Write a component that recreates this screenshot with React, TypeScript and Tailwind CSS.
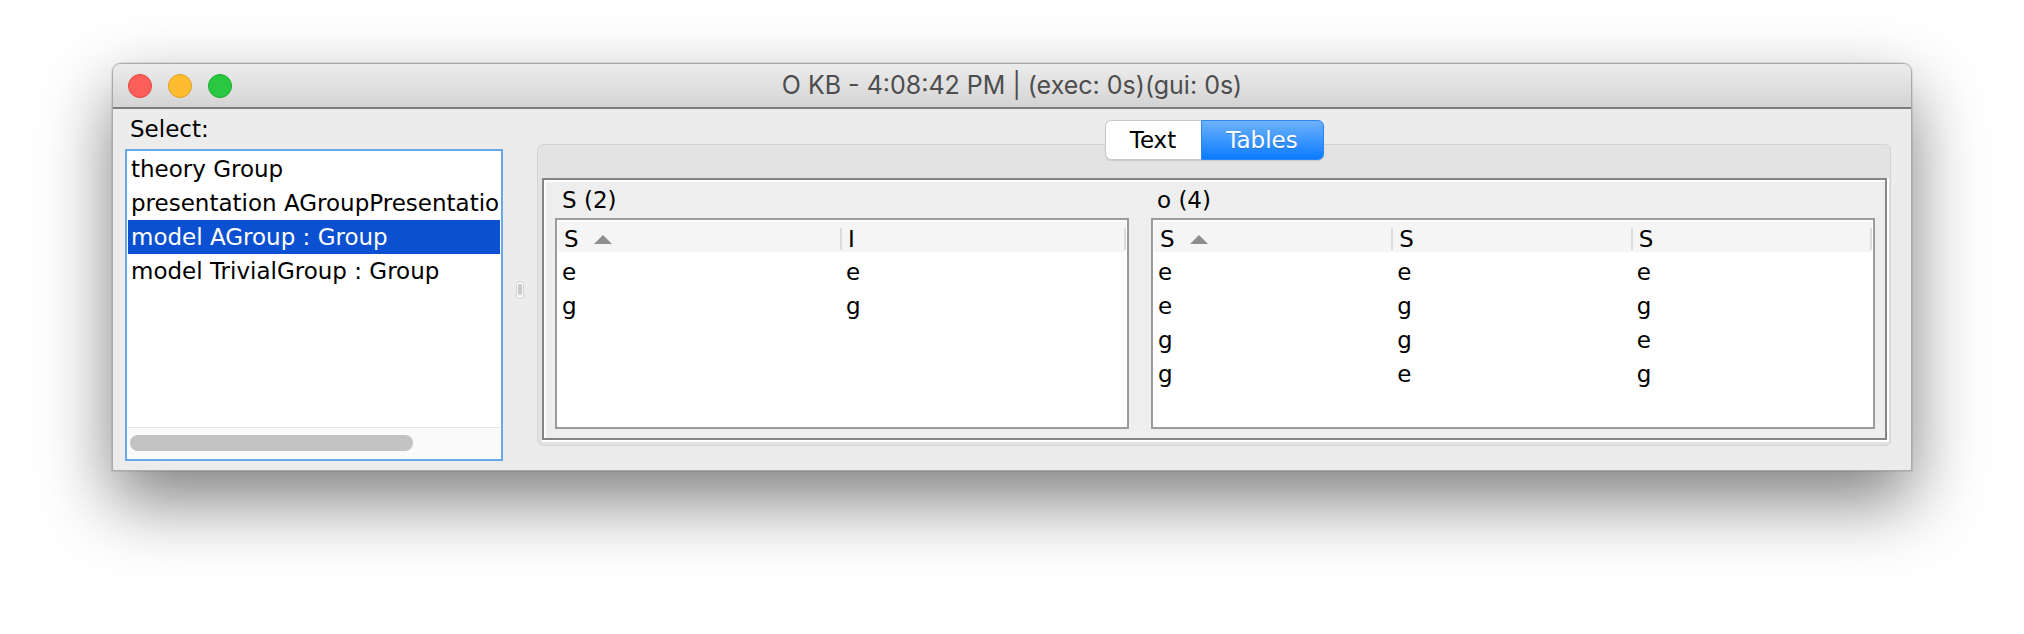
import React from "react";

type Row = string[];

const SortUp = () => (
  <svg width="18" height="9" viewBox="0 0 18 9" className="ml-[15px] shrink-0">
    <path d="M9 0 L18 9 L0 9 Z" fill="#8e8e8e" />
  </svg>
);

function HeaderCell({ label, sorted }: { label: string; sorted?: boolean }) {
  return (
    <div className="flex items-center h-full min-w-0">
      <div className="flex-1 flex items-center pl-[6px] min-w-0">
        <span>{label}</span>
        {sorted && <SortUp />}
      </div>
      <div className="w-[2px] h-[22px] bg-[#dcdcdc] shrink-0" />
    </div>
  );
}

function DataTable({
  widthClass,
  colsClass,
  headers,
  rows,
}: {
  widthClass: string;
  colsClass: string;
  headers: string[];
  rows: Row[];
}) {
  return (
    <div className={`${widthClass} h-[211px] border-2 border-[#9b9b9b] bg-white pt-[2px] px-px`}>
      <div className={`grid ${colsClass} h-[30px] bg-[#f5f5f5]`}>
        {headers.map((h, i) => (
          <HeaderCell key={i} label={h} sorted={i === 0} />
        ))}
      </div>
      <div className="pt-[3px]">
        {rows.map((r, i) => (
          <div key={i} className={`grid ${colsClass} h-[34px] leading-[34px]`}>
            {r.map((c, j) => (
              <div key={j} className="pl-[4px]">
                {c}
              </div>
            ))}
          </div>
        ))}
      </div>
    </div>
  );
}

export default function App() {
  const listItems = [
    "theory Group",
    "presentation AGroupPresentatio",
    "model AGroup : Group",
    "model TrivialGroup : Group",
  ];
  return (
    <div className="w-[2024px] h-[634px] bg-white overflow-hidden pt-[63px] pl-[112px] font-['DejaVu_Sans',sans-serif] text-[23px] text-black">
      <div className="w-[1800px] h-[408px] flex flex-col bg-[#ececec] border border-[#a9a9a9] rounded-t-[9px] overflow-hidden shadow-[0_30px_70px_rgba(0,0,0,0.5),0_0_0_1px_rgba(0,0,0,0.08)]">
        {/* Title bar */}
        <div className="h-[45px] shrink-0 grid grid-cols-[1fr_auto_1fr] items-center bg-[linear-gradient(#ececec,#d4d4d4)] border-b-2 border-[#7c7c7c]">
          <div className="flex items-center gap-[16px] pl-[15px]">
            <div className="w-[24px] h-[24px] rounded-full bg-[#fe5f58] border border-[#e0443e]" />
            <div className="w-[24px] h-[24px] rounded-full bg-[#febc2e] border border-[#dea123]" />
            <div className="w-[24px] h-[24px] rounded-full bg-[#29c840] border border-[#1aab29]" />
          </div>
          <div className="font-['Inter',sans-serif] text-[25px] text-[#4d4d4d] whitespace-nowrap">
            O KB - 4:08:42 PM | (exec: 0s)(gui: 0s)
          </div>
          <div />
        </div>

        {/* Content */}
        <div className="flex flex-1 min-h-0">
          {/* Left column */}
          <div className="ml-[12px] w-[378px] flex flex-col">
            <div className="h-[40px] leading-[40px] pl-[5px]">Select:</div>
            <div className="h-[312px] border-2 border-[#67a8ea] bg-white flex flex-col p-px">
              <div className="flex-1 min-h-0 overflow-hidden">
                {listItems.map((t, i) => (
                  <div
                    key={i}
                    className={`h-[34px] leading-[34px] pl-[3px] whitespace-nowrap ${
                      i === 2 ? "bg-[#0b50d1] text-white" : ""
                    }`}
                  >
                    {t}
                  </div>
                ))}
              </div>
              <div className="h-[31px] shrink-0 border-t border-[#e4e4e4] bg-[#fafafa] flex items-center">
                <div className="ml-[2px] w-[283px] h-[16px] rounded-full bg-[#c2c2c2]" />
              </div>
            </div>
          </div>

          {/* Splitter */}
          <div className="w-[34px] flex items-center justify-center">
            <div className="w-[8px] h-[18px] rounded-[3px] bg-[#f6f6f6] border border-[#d6d6d6] flex items-center justify-center">
              <div className="w-[4px] h-[11px] rounded-full bg-[#c9c9c9]" />
            </div>
          </div>

          {/* Right column */}
          <div className="w-[1354px] flex flex-col items-center pt-[11px]">
            <div className="relative z-10 flex h-[40px] shadow-[0_1px_1px_rgba(0,0,0,0.12)] rounded-[6px]">
              <div className="w-[96px] h-full flex items-center justify-center bg-white border border-r-0 border-[#c8c8c8] rounded-l-[6px]">
                Text
              </div>
              <div className="w-[123px] h-full flex items-center justify-center text-white bg-[linear-gradient(#6db2fb,#0b7bff)] border border-[#2c85f0] rounded-r-[6px] [text-shadow:0_1px_0_rgba(0,0,0,0.2)]">
                Tables
              </div>
            </div>
            <div className="-mt-[16px] w-[1354px] h-[302px] rounded-[6px] border border-[#d3d3d3] bg-[#e3e3e3] pt-[33px] pl-[4px]">
              <div className="w-[1347px] h-[264px] border-r-2 border-b-2 border-white">
                <div className="h-full border-2 border-[#858585]">
                  <div className="h-full border-t-2 border-l-2 border-white bg-[#eeeeee] flex pl-[9px] gap-[22px]">
                    <div className="flex flex-col">
                      <div className="h-[36px] leading-[36px] pl-[7px]">S (2)</div>
                      <DataTable
                        widthClass="w-[574px]"
                        colsClass="grid-cols-2"
                        headers={["S", "I"]}
                        rows={[
                          ["e", "e"],
                          ["g", "g"],
                        ]}
                      />
                    </div>
                    <div className="flex flex-col">
                      <div className="h-[36px] leading-[36px] pl-[6px]">o (4)</div>
                      <DataTable
                        widthClass="w-[724px]"
                        colsClass="grid-cols-3"
                        headers={["S", "S", "S"]}
                        rows={[
                          ["e", "e", "e"],
                          ["e", "g", "g"],
                          ["g", "g", "e"],
                          ["g", "e", "g"],
                        ]}
                      />
                    </div>
                  </div>
                </div>
              </div>
            </div>
          </div>
        </div>
      </div>
    </div>
  );
}
